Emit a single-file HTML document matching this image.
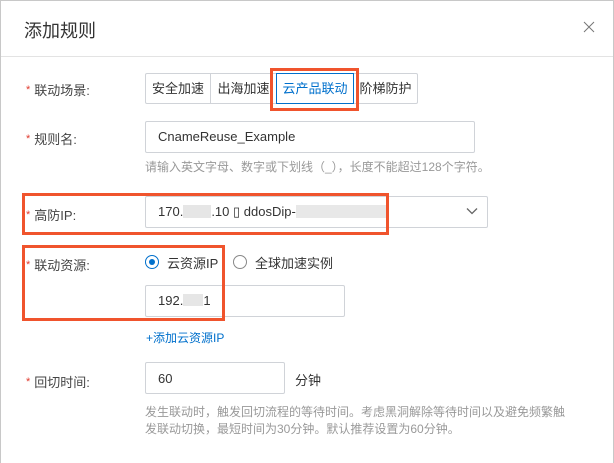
<!DOCTYPE html>
<html><head><meta charset="utf-8"><style>
*{margin:0;padding:0;box-sizing:border-box}
body{width:614px;height:463px;background:#fff;font-family:"Liberation Sans","Noto Sans CJK SC",sans-serif;color:#333;position:relative;overflow:hidden}
.frame{position:absolute;left:0;top:0;width:614px;height:463px;border:1px solid #c8c8c8;border-bottom:none}
.a{position:absolute;white-space:nowrap}
.lbl{font-size:13px;color:#444;left:26px}
.lbl b{color:#e03a2e;font-weight:normal;font-size:11px;margin-right:4px;position:relative;top:-2px}
.box{position:absolute;border:1px solid #d0d3d8;border-radius:2px;background:#fff}
.txt{font-size:13px;color:#333}
.hint{font-size:12px;color:#999}
.red{position:absolute;border:3px solid #f0542d}
.seg{position:absolute;top:73px;height:31px;border:1px solid #d0d3d8;font-size:13px;line-height:29px;text-align:center;color:#333;background:#fff}
</style></head><body>
<div class="frame"></div>
<div class="a" style="left:24px;top:17px;font-size:18px;color:#333">添加规则</div>
<svg class="a" style="left:583px;top:21px" width="12" height="12" viewBox="0 0 12 12"><path d="M1 1L11 11M11 1L1 11" stroke="#777" stroke-width="1"/></svg>
<div class="a" style="left:1px;top:56px;width:612px;height:1px;background:#e3e3e3"></div>

<div class="a lbl" style="top:80px"><b>*</b>联动场景:</div>
<div class="seg" style="left:145px;width:66px;border-radius:2px 0 0 2px">安全加速</div>
<div class="seg" style="left:210px;width:67px">出海加速</div>
<div class="seg" style="left:276px;width:78px;border-color:#0070cc;color:#0070cc;z-index:2">云产品联动</div>
<div class="seg" style="left:353px;width:65px;border-radius:0 2px 2px 0">阶梯防护</div>
<div class="red" style="left:270px;top:68px;width:89px;height:43px"></div>

<div class="a lbl" style="top:129px"><b>*</b>规则名:</div>
<div class="box" style="left:145px;top:121px;width:330px;height:32px"></div>
<div class="a txt" style="left:158px;top:129px">CnameReuse_Example</div>
<div class="a hint" style="left:145px;top:158px">请输入英文字母、数字或下划线（_），长度不能超过128个字符。</div>

<div class="a lbl" style="top:205px"><b>*</b>高防IP:</div>
<div class="box" style="left:145px;top:196px;width:343px;height:32px"></div>
<div class="a txt" style="left:158px;top:204px">170.<span style="display:inline-block;width:28px;height:13px;background:#e6e6e6;vertical-align:-2px"></span>.10 ▯ ddosDip-<span style="display:inline-block;width:90px;height:13px;background:#e8e8e8;vertical-align:-2px"></span></div>
<svg class="a" style="left:466px;top:207px" width="12" height="8" viewBox="0 0 12 8"><path d="M1 1.5L6 6.5L11 1.5" stroke="#666" stroke-width="1.3" fill="none"/></svg>
<div class="red" style="left:22px;top:193px;width:367px;height:42px"></div>

<div class="a lbl" style="top:255px"><b>*</b>联动资源:</div>
<div class="a" style="left:145px;top:255px;width:14px;height:14px;border:1px solid #0070cc;border-radius:50%"></div>
<div class="a" style="left:149px;top:259px;width:6px;height:6px;background:#0070cc;border-radius:50%"></div>
<div class="a txt" style="left:167px;top:253px">云资源IP</div>
<div class="a" style="left:233px;top:255px;width:14px;height:14px;border:1px solid #888;border-radius:50%"></div>
<div class="a txt" style="left:255px;top:253px">全球加速实例</div>
<div class="box" style="left:145px;top:285px;width:200px;height:32px"></div>
<div class="a txt" style="left:158px;top:293px">192.<span style="display:inline-block;width:20px;height:12px;background:#e6e6e6;vertical-align:-1px"></span>1</div>
<div class="red" style="left:22px;top:245px;width:203px;height:76px"></div>

<div class="a" style="left:146px;top:329px;font-size:12px;color:#0070cc">+添加云资源IP</div>

<div class="a lbl" style="top:372px"><b>*</b>回切时间:</div>
<div class="box" style="left:145px;top:362px;width:140px;height:32px"></div>
<div class="a txt" style="left:158px;top:371px">60</div>
<div class="a txt" style="left:295px;top:370px">分钟</div>
<div class="a hint" style="left:145px;top:403px">发生联动时，触发回切流程的等待时间。考虑黑洞解除等待时间以及避免频繁触</div>
<div class="a hint" style="left:145px;top:420px">发联动切换，最短时间为30分钟。默认推荐设置为60分钟。</div>
</body></html>
